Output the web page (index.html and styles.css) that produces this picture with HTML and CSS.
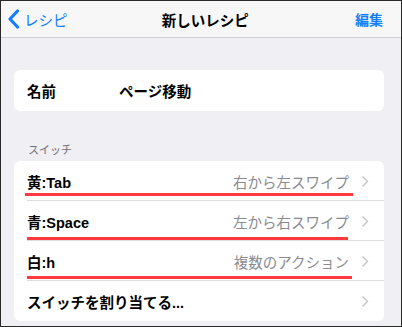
FILE: index.html
```html
<!DOCTYPE html>
<html lang="ja">
<head>
    <meta charset="UTF-8">
    <meta name="viewport" content="width=device-width, initial-scale=1.0">
    <title>新しいレシピ</title>
    <link rel="stylesheet" href="styles.css">
</head>
<body>
    <div class="frame">
        <div class="navbar">
            <a class="back">
                <svg width="13" height="20" viewBox="0 0 13 20"><polyline points="10.5,2 3,10 10.5,18" fill="none" stroke="#147efb" stroke-width="3.2" stroke-linecap="round" stroke-linejoin="round"/></svg>
                <span>レシピ</span>
            </a>
            <div class="title">新しいレシピ</div>
            <a class="edit">編集</a>
        </div>

        <div class="card name-card">
            <div class="row">
                <span class="label">名前</span>
                <span class="name-value">ページ移動</span>
            </div>
        </div>

        <div class="section-header">スイッチ</div>
        <div class="card">
            <div class="row sep">
                <span class="label">黄:Tab</span>
                <span class="value">右から左スワイプ</span>
                <svg class="chevron" width="8" height="13" viewBox="0 0 8 13"><polyline points="1.5,1.5 6.5,6.5 1.5,11.5" fill="none" stroke="#c4c4c9" stroke-width="1.4"/></svg>
                <div class="mark mark-1"></div>
            </div>
            <div class="row sep">
                <span class="label">青:Space</span>
                <span class="value">左から右スワイプ</span>
                <svg class="chevron" width="8" height="13" viewBox="0 0 8 13"><polyline points="1.5,1.5 6.5,6.5 1.5,11.5" fill="none" stroke="#c4c4c9" stroke-width="1.4"/></svg>
                <div class="mark mark-2"></div>
            </div>
            <div class="row sep">
                <span class="label">白:h</span>
                <span class="value">複数のアクション</span>
                <svg class="chevron" width="8" height="13" viewBox="0 0 8 13"><polyline points="1.5,1.5 6.5,6.5 1.5,11.5" fill="none" stroke="#c4c4c9" stroke-width="1.4"/></svg>
                <div class="mark mark-3"></div>
            </div>
            <div class="row">
                <span class="label">スイッチを割り当てる...</span>
                <span class="value"></span>
                <svg class="chevron" width="8" height="13" viewBox="0 0 8 13"><polyline points="1.5,1.5 6.5,6.5 1.5,11.5" fill="none" stroke="#c4c4c9" stroke-width="1.4"/></svg>
            </div>
        </div>
    </div>
</body>
</html>
```

FILE: styles.css
```css
html, body {
    margin: 0;
    padding: 0;
}
body {
    font-family: "Liberation Sans", "Noto Sans CJK JP", sans-serif;
    color: #000;
}
.frame {
    width: 402px;
    height: 327px;
    box-sizing: border-box;
    border: 1px solid #2a2a2a;
    background-color: #efeff4;
    overflow: hidden;
}
.navbar {
    height: 37px;
    box-sizing: border-box;
    background-color: #f7f7f7;
    border-bottom: 1px solid #cfcfd3;
    display: flex;
    align-items: center;
    padding: 0 18px 0 6px;
}
.back {
    display: flex;
    align-items: center;
    gap: 4px;
    color: #147efb;
    font-size: 14.5px;
}
.title {
    flex: 1;
    text-align: center;
    font-size: 14.5px;
    font-weight: bold;
    padding-right: 12px;
}
.edit {
    color: #147efb;
    font-size: 14px;
    font-weight: bold;
}
.card {
    background: #fff;
    border-radius: 6px;
    margin: 0 17px 0 13px;
}
.name-card {
    margin-top: 32px;
}
.name-card .row {
    height: 41px;
}
.name-value {
    margin-left: 63px;
    font-size: 14.5px;
    font-weight: bold;
}
.section-header {
    font-size: 11px;
    color: #6d6d72;
    padding: 30px 0 0 27px;
    height: 20px;
}
.row {
    position: relative;
    display: flex;
    align-items: center;
    height: 40px;
    padding: 0 15px 0 13px;
}
.row.sep::after {
    content: "";
    position: absolute;
    left: 13px;
    right: 0;
    bottom: 0;
    height: 1px;
    background: #dcdce0;
}
.label {
    font-size: 14.5px;
    font-weight: bold;
}
.value {
    flex: 1;
    text-align: right;
    color: #8a8a8f;
    font-size: 14.5px;
    margin-right: 12px;
}
.chevron {
    display: block;
}
.mark {
    position: absolute;
    height: 3px;
    background: #fc3a3f;
}
.mark-1 {
    left: 11px;
    width: 328px;
    top: 32px;
}
.mark-2 {
    left: 13px;
    width: 321px;
    top: 36px;
}
.mark-3 {
    left: 13px;
    width: 325px;
    top: 35px;
}
```
